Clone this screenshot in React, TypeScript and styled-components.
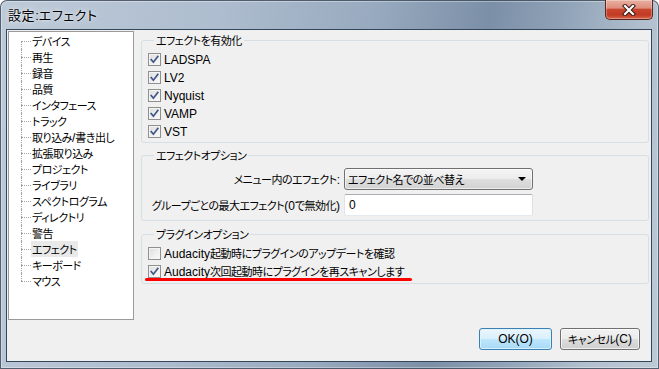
import React from "react";
import styled, { createGlobalStyle, css } from "styled-components";

const CJK = `"Noto Sans CJK JP", "Liberation Sans", sans-serif`;
const LATIN = `"Liberation Sans", "Noto Sans CJK JP", sans-serif`;

const GlobalStyle = createGlobalStyle`
  html, body { margin: 0; padding: 0; background: #ffffff; }
  * { box-sizing: border-box; }
  body { font-family: ${CJK}; }
`;

const Window = styled.div`
  width: 659px;
  height: 369px;
  padding: 0 7px 7px 6px;
  display: flex;
  flex-direction: column;
  border-radius: 7px 7px 0 0;
  background: linear-gradient(
    100deg,
    #bdcad8 0%,
    #aebdcf 30%,
    #98aabf 52%,
    #7b8fa7 68%,
    #8fa2b7 78%,
    #b3c1cf 90%,
    #bccad6 100%
  );
  box-shadow: inset 0 0 0 1px rgba(40, 55, 72, 0.75), inset 0 0 0 2px rgba(255, 255, 255, 0.35);
  font-family: ${CJK};
  font-size: 11px;
  letter-spacing: -0.5px;
  font-feature-settings: "palt";
  color: #000;
`;

const Latin = styled.span`
  font-family: ${LATIN};
  font-size: 12px;
  letter-spacing: 0;
  font-feature-settings: normal;
`;

const T: React.FC<{ children: string }> = ({ children }) => (
  <>
    {children.split(/([\x20-\x7e]+)/).map((part, i) =>
      part === "" ? null : /[\x20-\x7e]/.test(part) ? <Latin key={i}>{part}</Latin> : <React.Fragment key={i}>{part}</React.Fragment>
    )}
  </>
);

const TitleBar = styled.div`
  height: 29px;
  display: flex;
  align-items: flex-start;
  flex: none;
`;

const Title = styled.div`
  margin: 6px 0 0 2px;
  line-height: 18px;
  font-size: 13px;
  letter-spacing: 0.6px;
  text-shadow: 0 0 6px rgba(255, 255, 255, 0.9), 0 0 2px rgba(255, 255, 255, 0.7);
  & > span {
    font-size: 13px;
  }
`;

const CloseButton = styled.div`
  margin-left: auto;
  margin-right: -1px;
  width: 48px;
  height: 20px;
  display: flex;
  align-items: center;
  justify-content: center;
  border: 1px solid #56281f;
  border-top: none;
  border-radius: 0 0 5px 5px;
  background: linear-gradient(
    180deg,
    #e8b0a2 0%,
    #df8e7c 42%,
    #c9462f 50%,
    #c13a24 78%,
    #d9664a 100%
  );
  box-shadow: inset 0 0 0 1px rgba(255, 255, 255, 0.3);
`;

const Client = styled.div`
  flex: 1;
  display: flex;
  flex-direction: column;
  background: #f0f0f0;
  border: 1px solid #34465a;
`;

const Main = styled.div`
  display: flex;
  align-items: flex-start;
  padding: 1px 0 0 1px;
`;

const Tree = styled.div`
  width: 126px;
  height: 289px;
  flex: none;
  background: #ffffff;
  border: 1px solid #9a9a9a;
  padding-top: 1px;
`;

const TreeRow = styled.div`
  display: flex;
  align-items: stretch;
  height: 16px;
`;

const Connector = styled.span<{ $pos: "first" | "mid" | "last" }>`
  position: relative;
  width: 10px;
  margin-left: 12px;
  flex: none;
  &::before {
    content: "";
    position: absolute;
    left: 0;
    border-left: 1px dotted #a0a0a0;
    top: ${(p) => (p.$pos === "first" ? "8px" : "0")};
    bottom: ${(p) => (p.$pos === "last" ? "8px" : "0")};
  }
  &::after {
    content: "";
    position: absolute;
    left: 0;
    right: 0;
    top: 8px;
    border-top: 1px dotted #a0a0a0;
  }
`;

const TreeLabel = styled.span<{ $selected?: boolean }>`
  line-height: 16px;
  padding: 0 1px;
  white-space: nowrap;
  background: ${(p) => (p.$selected ? "#e9e9e9" : "transparent")};
`;

const Panel = styled.div`
  margin: 1px 0 0 7px;
  width: 508px;
  display: flex;
  flex-direction: column;
`;

const Group = styled.fieldset<{ $gap?: number; $pad: string }>`
  margin: ${(p) => p.$gap ?? 0}px 0 0 0;
  padding: ${(p) => p.$pad};
  border: 1px solid #d5dfe5;
  border-radius: 3px;
  min-width: 0;
`;

const Legend = styled.legend`
  margin-left: 6px;
  padding: 0 2px;
  line-height: 16px;
  font-size: 11px;
`;

const CheckRow = styled.div`
  position: relative;
  display: flex;
  align-items: center;
  gap: 3px;
  height: 18px;
  line-height: 16px;
  white-space: nowrap;
`;

const Box = styled.span`
  width: 13px;
  height: 13px;
  flex: none;
  border: 1px solid #8e8f8f;
  background: linear-gradient(135deg, #dcdcdc 0%, #f0f0f0 60%, #fafafa 100%);
  box-shadow: inset 0 0 0 1px #f4f4f4;
  display: flex;
  align-items: center;
  justify-content: center;
`;

const Annotation = styled.span`
  position: absolute;
  left: -3px;
  top: 16px;
  width: 267px;
  height: 3px;
  border-radius: 2px;
  background: #ff0000;
`;

const FormGrid = styled.div`
  display: grid;
  grid-template-columns: 192px 189px;
  column-gap: 4px;
  row-gap: 4px;
  align-items: center;
`;

const FieldLabel = styled.span`
  justify-self: end;
  white-space: nowrap;
  line-height: 16px;
`;

const controlBase = css`
  width: 189px;
  height: 22px;
  color: #000;
`;

const Choice = styled.div`
  ${controlBase};
  display: flex;
  align-items: center;
  padding: 0 6px 0 3px;
  border: 1px solid #707070;
  border-radius: 3px;
  background: linear-gradient(180deg, #f4f4f4 0%, #ececec 50%, #dedede 51%, #d2d2d2 100%);
  box-shadow: inset 0 0 0 1px rgba(255, 255, 255, 0.6);
  white-space: nowrap;
  line-height: 16px;
`;

const Arrow = styled.span`
  margin-left: auto;
  width: 0;
  height: 0;
  border-left: 4px solid transparent;
  border-right: 4px solid transparent;
  border-top: 4px solid #000;
`;

const TextField = styled.input`
  ${controlBase};
  padding: 0 4px;
  font-family: ${LATIN};
  font-size: 12px;
  border: 1px solid;
  border-color: #abadb3 #dbdfe6 #e3e9ef #e2e3ea;
  border-radius: 2px;
  background: #fff;
  outline: none;
`;

const ButtonRow = styled.div`
  display: flex;
  justify-content: flex-end;
  gap: 8px;
  margin-top: 8px;
  padding-right: 11px;
`;

const Button = styled.div<{ $default?: boolean; $w: number }>`
  width: ${(p) => p.$w}px;
  height: 22px;
  border-radius: 3px;
  border: 1px solid ${(p) => (p.$default ? "#3c7fb1" : "#707070")};
  background: ${(p) =>
    p.$default
      ? "linear-gradient(180deg, #eaf6fd 0%, #d9f0fc 50%, #bee6fd 51%, #a7d9f5 100%)"
      : "linear-gradient(180deg, #f2f2f2 0%, #ebebeb 50%, #dddddd 51%, #cfcfcf 100%)"};
  box-shadow: inset 0 0 0 1px ${(p) => (p.$default ? "rgba(220,244,255,0.9)" : "rgba(255,255,255,0.7)")};
  display: flex;
  align-items: center;
  justify-content: center;
  line-height: 16px;
  white-space: nowrap;
`;

const CheckMark = () => (
  <svg width="9" height="9" viewBox="0 0 9 9">
    <path d="M1.2 4.6 L3.4 7.2 L7.8 1.4" fill="none" stroke="#3f5688" strokeWidth="1.7" strokeLinecap="square" />
  </svg>
);

const Check: React.FC<{ checked?: boolean; label: string; children?: React.ReactNode }> = ({ checked, label, children }) => (
  <CheckRow>
    <Box>{checked && <CheckMark />}</Box>
    <span>
      <T>{label}</T>
    </span>
    {children}
  </CheckRow>
);

const CloseGlyph = () => (
  <svg width="14" height="12" viewBox="0 0 14 12">
    <path d="M3 2 L11 10 M11 2 L3 10" stroke="#3a1a14" strokeWidth="4.2" strokeLinecap="square" />
    <path d="M3 2 L11 10 M11 2 L3 10" stroke="#ffffff" strokeWidth="2.2" strokeLinecap="square" />
  </svg>
);

const treeItems = [
  "デバイス",
  "再生",
  "録音",
  "品質",
  "インタフェース",
  "トラック",
  "取り込み/書き出し",
  "拡張取り込み",
  "プロジェクト",
  "ライブラリ",
  "スペクトログラム",
  "ディレクトリ",
  "警告",
  "エフェクト",
  "キーボード",
  "マウス",
];

const effects = ["LADSPA", "LV2", "Nyquist", "VAMP", "VST"];

export default function App() {
  return (
    <>
      <GlobalStyle />
      <Window>
        <TitleBar>
          <Title>
            <T>設定:エフェクト</T>
          </Title>
          <CloseButton>
            <CloseGlyph />
          </CloseButton>
        </TitleBar>
        <Client>
          <Main>
            <Tree>
              {treeItems.map((t, i) => (
                <TreeRow key={t}>
                  <Connector $pos={i === 0 ? "first" : i === treeItems.length - 1 ? "last" : "mid"} />
                  <TreeLabel $selected={t === "エフェクト"}>
                    <T>{t}</T>
                  </TreeLabel>
                </TreeRow>
              ))}
            </Tree>
            <Panel>
              <Group $pad="2px 0 2px 6px">
                <Legend>エフェクトを有効化</Legend>
                {effects.map((e) => (
                  <Check key={e} checked label={e} />
                ))}
              </Group>
              <Group $gap={4} $pad="5px 0 4px 6px">
                <Legend>エフェクトオプション</Legend>
                <FormGrid>
                  <FieldLabel>
                    <T>メニュー内のエフェクト:</T>
                  </FieldLabel>
                  <Choice>
                    エフェクト名での並べ替え
                    <Arrow />
                  </Choice>
                  <FieldLabel>
                    <T>グループごとの最大エフェクト(0で無効化)</T>
                  </FieldLabel>
                  <TextField readOnly value="0" />
                </FormGrid>
              </Group>
              <Group $gap={5} $pad="2px 0 3px 6px">
                <Legend>プラグインオプション</Legend>
                <Check label="Audacity起動時にプラグインのアップデートを確認" />
                <Check checked label="Audacity次回起動時にプラグインを再スキャンします">
                  <Annotation />
                </Check>
              </Group>
            </Panel>
          </Main>
          <ButtonRow>
            <Button $default $w={73}>
              <T>OK(O)</T>
            </Button>
            <Button $w={80}>
              <T>キャンセル(C)</T>
            </Button>
          </ButtonRow>
        </Client>
      </Window>
    </>
  );
}
